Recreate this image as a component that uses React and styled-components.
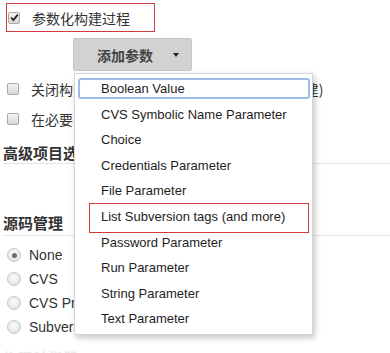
import React from 'react';
import styled, { createGlobalStyle } from 'styled-components';

const GlobalStyle = createGlobalStyle`
  body {
    margin: 0;
    background: #fff;
    font-family: "Liberation Sans", "Noto Sans CJK SC", sans-serif;
    color: #333;
  }
`;

const PARAM_TYPES = [
  'Boolean Value',
  'CVS Symbolic Name Parameter',
  'Choice',
  'Credentials Parameter',
  'File Parameter',
  'List Subversion tags (and more)',
  'Password Parameter',
  'Run Parameter',
  'String Parameter',
  'Text Parameter',
];

const SCM = ['None', 'CVS', 'CVS Projectset', 'Subversion'];

const CheckMark = () => (
  <svg width="9" height="9" viewBox="0 0 9 9">
    <path d="M1.2 4.6 L3.4 7 L7.8 1.6" fill="none" stroke="#222" strokeWidth="1.8" />
  </svg>
);

const App = () => {
  return (
    <Page>
      <GlobalStyle />
      <Marked>
        <Box>
          <CheckMark />
        </Box>
        <CjkLabel>参数化构建过程</CjkLabel>
      </Marked>

      <ButtonWrap>
        <AddButton>
          <span>添加参数</span>
          <Caret />
        </AddButton>
        <Menu>
          {PARAM_TYPES.map((name, i) => (
            <Item key={name} focused={i === 0} marked={name.startsWith('List')}>
              {name}
            </Item>
          ))}
        </Menu>
      </ButtonWrap>

      <Options>
        <OptionRow>
          <Box />
          <CjkLabel>关闭构建 (重新开启构建前不允许进行新的构建)</CjkLabel>
        </OptionRow>
        <OptionRow>
          <Box />
          <CjkLabel>在必要的时候并发构建</CjkLabel>
        </OptionRow>
      </Options>

      <Section top={9} pad={0}>高级项目选项</Section>
      <Section top={49} pad={2}>源码管理</Section>

      <RadioList>
        {SCM.map((name, i) => (
          <RadioRow key={name}>
            <Radio selected={i === 0} />
            <RadioLabel>{name}</RadioLabel>
          </RadioRow>
        ))}
      </RadioList>
      <Faded>构建触发器</Faded>
    </Page>
  );
};

export default App;

const Page = styled.div`
  width: 390px;
  height: 353px;
  overflow: hidden;
  padding-top: 3px;
  box-sizing: border-box;
`;

const Marked = styled.div`
  display: flex;
  align-items: center;
  box-sizing: border-box;
  width: 149px;
  height: 29px;
  margin-left: 6px;
  padding-left: 1px;
  border: 1px solid #cf3b3b;
`;

const Box = styled.span`
  display: inline-flex;
  align-items: center;
  justify-content: center;
  box-sizing: border-box;
  width: 12px;
  height: 12px;
  margin-right: 12px;
  border: 1px solid #a9a9a9;
  border-radius: 2px;
  background: linear-gradient(#f4f4f4, #d8d8d8);
  flex-shrink: 0;
`;

const CjkLabel = styled.span`
  font-family: "Noto Sans CJK SC", sans-serif;
  font-size: 14px;
  line-height: 20px;
  color: #333;
  white-space: nowrap;
`;

const ButtonWrap = styled.div`
  position: relative;
  margin: 6px 0 0 73px;
  width: 119px;
`;

const AddButton = styled.div`
  display: flex;
  align-items: center;
  box-sizing: border-box;
  height: 33px;
  padding: 0 12px 0 23px;
  background: #d2d2d2;
  border: 1px solid #c6c6c6;
  border-radius: 2px;
  font-family: "Noto Sans CJK SC", sans-serif;
  font-size: 14px;
  font-weight: bold;
  color: #444;
  span {
    flex: 1;
  }
`;

const Caret = styled.i`
  width: 0;
  height: 0;
  border-left: 3.5px solid transparent;
  border-right: 3.5px solid transparent;
  border-top: 4px solid #222;
  margin-top: 1px;
`;

const Menu = styled.ul`
  position: absolute;
  z-index: 2;
  top: 35px;
  left: 1px;
  width: 239px;
  box-sizing: border-box;
  margin: 0;
  padding: 2px 2px 2px 3px;
  list-style: none;
  background: #fff;
  border: 1px solid #d6d6d6;
  box-shadow: 2px 3px 6px rgba(0, 0, 0, 0.22);
`;

const Item = styled.li`
  position: relative;
  height: 25.6px;
  line-height: 25.6px;
  padding-left: 23px;
  font-size: 13px;
  color: #1e1e1e;
  white-space: nowrap;
  &::before {
    content: '';
    display: ${(props) => (props.focused ? 'block' : 'none')};
    position: absolute;
    inset: 2px 0 3px 0;
    border: 2px solid #9cbbe8;
    border-radius: 3px;
  }
  &::after {
    content: '';
    display: ${(props) => (props.marked ? 'block' : 'none')};
    position: absolute;
    inset: -1px 1px -3px 11px;
    border: 1px solid #cf3b3b;
  }
`;

const Options = styled.div`
  margin-top: 3px;
`;

const OptionRow = styled.div`
  display: flex;
  align-items: center;
  height: 30px;
  padding-left: 7px;
`;

const Section = styled.h3`
  margin: ${(props) => props.top}px 0 0 3px;
  padding-bottom: ${(props) => props.pad}px;
  font-family: "Noto Sans CJK SC", sans-serif;
  font-size: 15px;
  line-height: 20px;
  font-weight: bold;
  color: #333;
  border-bottom: 1px solid #e2e2e2;
`;

const RadioList = styled.div`
  margin-top: 7px;
`;

const RadioRow = styled.div`
  display: flex;
  align-items: center;
  height: 24px;
  padding-left: 7px;
`;

const Radio = styled.span`
  position: relative;
  box-sizing: border-box;
  width: 14px;
  height: 14px;
  margin-right: 8px;
  border: 1px solid #c4c4c4;
  border-radius: 50%;
  background: radial-gradient(circle at 50% 35%, #fbfbfb, #dedede);
  &::after {
    content: '';
    display: ${(props) => (props.selected ? 'block' : 'none')};
    position: absolute;
    top: 3.5px;
    left: 3.5px;
    width: 5px;
    height: 5px;
    border-radius: 50%;
    background: #6a6a6a;
  }
`;

const RadioLabel = styled.span`
  font-size: 14px;
  color: #333;
`;

const Faded = styled.div`
  margin: 9px 0 0 3px;
  font-family: "Noto Sans CJK SC", sans-serif;
  font-size: 15px;
  line-height: 20px;
  font-weight: bold;
  color: #ececec;
`;
